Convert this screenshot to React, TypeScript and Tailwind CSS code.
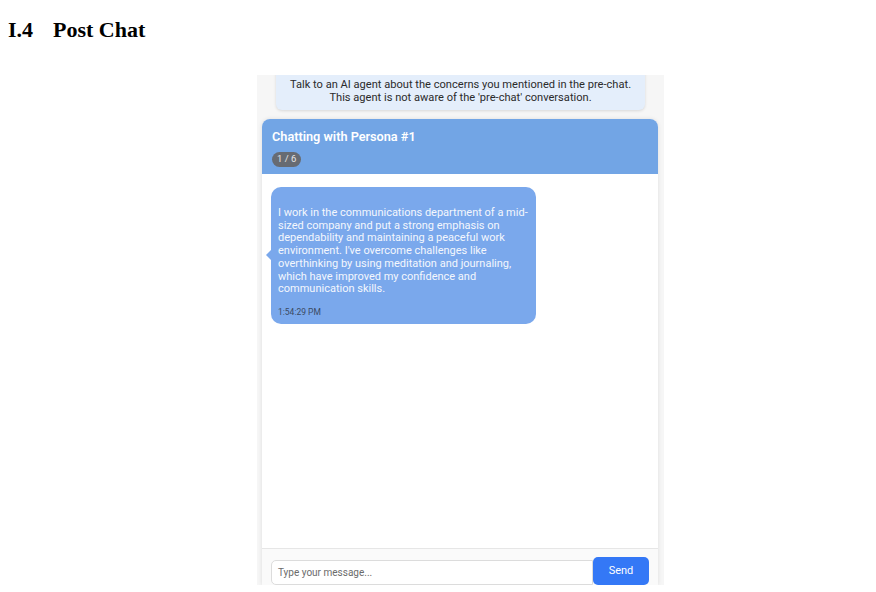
export default function App() {
  return (
    <div className="w-[876px] h-[592px] bg-white overflow-hidden relative">
      <div className="pt-[16px] pl-[8px] font-['Liberation_Serif',serif] font-bold text-[22px] leading-[28px] text-black flex">
        <span className="w-[45px]">I.4</span>
        <span>Post Chat</span>
      </div>

      <div className="ml-[257px] mt-[31px] w-[407px] h-[510px] bg-[#f6f6f6] overflow-hidden flex flex-col font-['Roboto',sans-serif]">
        <div className="mx-[19px] -mt-[12px] pt-[15px] pb-[6px] bg-[#e4eefb] rounded-b-[6px] shadow-[0_1px_3px_rgba(0,0,0,0.12)] text-center text-[11.1px] leading-[13px] text-[#2b2b2b] whitespace-nowrap">
          <div>Talk to an AI agent about the concerns you mentioned in the pre-chat.</div>
          <div>This agent is not aware of the 'pre-chat' conversation.</div>
        </div>

        <div className="mt-[9px] ml-[5px] w-[396px] flex-1 flex flex-col bg-white rounded-t-[8px] shadow-[0_0_4px_rgba(0,0,0,0.10)] overflow-hidden">
          <div className="h-[55px] bg-[#72a5e5] px-[10px] pt-[10px]">
            <div className="text-white font-semibold text-[12.7px] leading-[16px]">Chatting with Persona #1</div>
            <div className="mt-[3px] inline-flex items-center h-[15px] px-[5px] rounded-full bg-[#676b72] text-[#e6e6e6] text-[9.5px]">1 / 6</div>
          </div>

          <div className="flex-1 px-[9px] pt-[13px]">
            <div className="relative w-[265px] bg-[#7aa8ec] rounded-[10px] pl-[7px] pr-[6px] pt-[20px] pb-[7px]">
              <div className="absolute -left-[5px] top-[63px] w-0 h-0 border-y-[5px] border-y-transparent border-r-[5px] border-r-[#7aa8ec]" />
              <div className="text-[11px] leading-[12.7px] text-[#f4f7fd]">
                I work in the communications department of a mid-sized company and put a strong emphasis on dependability and maintaining a peaceful work environment. I've overcome challenges like overthinking by using meditation and journaling, which have improved my confidence and communication skills.
              </div>
              <div className="mt-[11px] text-[8.5px] leading-[10px] text-[#3b4a63]">1:54:29 PM</div>
            </div>
          </div>

          <div className="h-[37px] border-t border-[#e6e6e6] bg-[#fafafa] px-[9px] pt-[7px] flex items-end">
            <div className="flex-1 h-[25px] border border-[#dcdcdc] rounded-l-[5px] bg-white px-[6px] flex items-center text-[10px] text-[#6b6b6b]">
              Type your message...
            </div>
            <div className="w-[56px] h-[28px] bg-[#3478f6] rounded-[5px] flex items-center justify-center text-white text-[11px]">
              Send
            </div>
          </div>
        </div>
      </div>
    </div>
  );
}
